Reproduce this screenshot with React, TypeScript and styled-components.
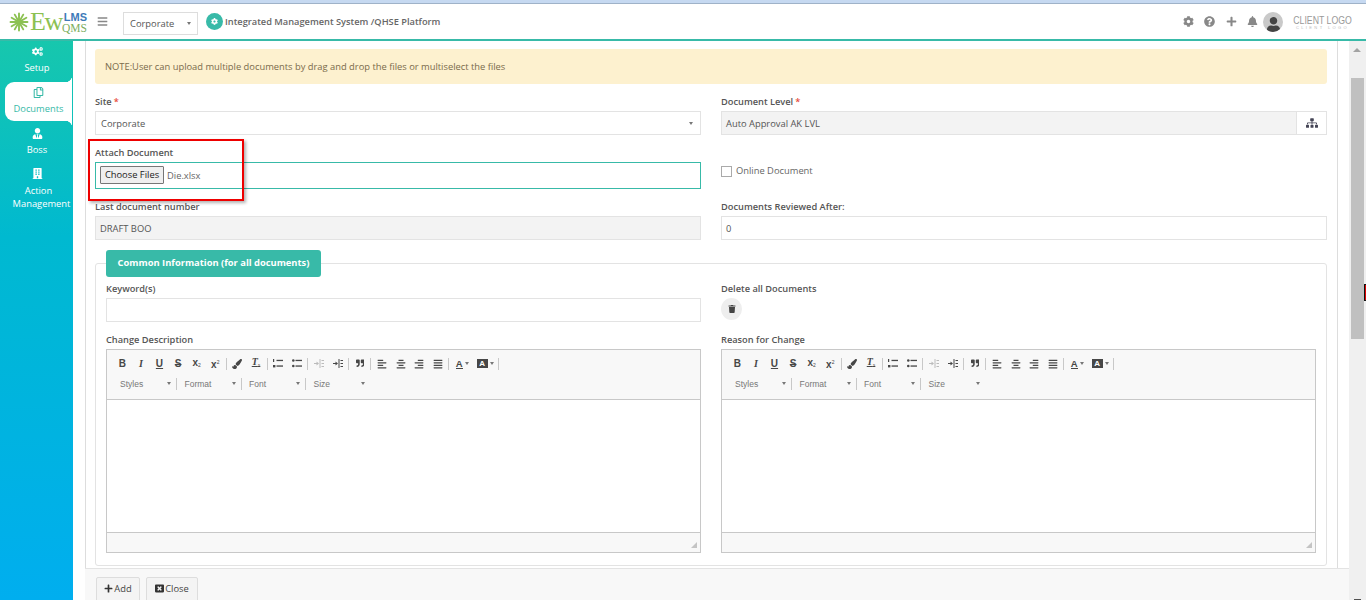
import React from "react";
import styled, { createGlobalStyle } from "styled-components";
import {
  FaAlignCenter, FaAlignJustify, FaAlignLeft, FaAlignRight, FaBars, FaBell, FaBuilding, FaCog, FaCogs,
  FaPaintBrush, FaPlus, FaQuestionCircle, FaQuoteRight, FaRegCopy, FaSitemap, FaTrash, FaUser, FaUserTie,
  FaWindowClose,
} from "react-icons/fa";

const GlobalStyle = createGlobalStyle`
  html, body {
    margin: 0;
    height: 600px;
    overflow: hidden;
    background: #fff;
  }
  * { box-sizing: border-box; }
  body {
    font-family: "Open Sans", "Liberation Sans", sans-serif;
    font-size: 9.35px;
    color: #555;
  }
`;

const Page = styled.div`
  position: relative;
  height: 600px;
  display: flex;
  flex-direction: column;
  overflow: hidden;
`;

const TopStrip = styled.div`
  height: 4px;
  flex: none;
  background: #c6d9f1;
  border-bottom: 1px solid #9fb2c8;
`;

const Header = styled.header`
  height: 37px;
  flex: none;
  display: flex;
  align-items: center;
  padding: 0 14px 0 9px;
  background: #fff;
  border-bottom: 2px solid #38baa8;
`;

const Logo = styled.div`
  width: 78px;
  height: 24px;
  display: flex;
  align-items: center;
  flex: none;
`;

const LogoEw = styled.span`
  width: 32px;
  margin-left: 1px;
  font-family: "Liberation Serif", serif;
  font-size: 26px;
  line-height: 24px;
  letter-spacing: -1.5px;
  white-space: nowrap;
  color: #8cc152;
`;

const LogoStack = styled.div`
  display: flex;
  flex-direction: column;
  align-items: flex-end;
  width: 25px;
  margin-top: 2px;
  line-height: 11px;
`;

const LogoLms = styled.span`
  font-family: "Liberation Sans", sans-serif;
  font-size: 11px;
  font-weight: 700;
  color: #3d7ab8;
`;

const LogoQms = styled.span`
  font-family: "Liberation Serif", serif;
  font-size: 11.5px;
  color: #7cae5e;
`;

const Burger = styled.span`
  display: flex;
  margin-left: 10px;
  color: #888;
  font-size: 11px;
`;

const SiteSelect = styled.div`
  width: 75px;
  height: 23px;
  margin: 3px 0 0 15px;
  padding: 0 6px;
  display: flex;
  align-items: center;
  justify-content: space-between;
  border: 1px solid #ddd;
  color: #555;
  flex: none;
`;

const Caret = styled.span`
  width: 0;
  height: 0;
  flex: none;
  border-left: 2px solid transparent;
  border-right: 2px solid transparent;
  border-top: 3px solid #777;
`;

const ModuleBadge = styled.span`
  width: 17px;
  height: 17px;
  margin-left: 8px;
  border-radius: 50%;
  background: #38baa8;
  color: #fff;
  display: flex;
  align-items: center;
  justify-content: center;
  font-size: 7px;
  flex: none;
`;

const Title = styled.span`
  margin-left: 2px;
  margin-bottom: 1px;
  color: #666;
  font-size: 9.25px;
  font-weight: 600;
  white-space: nowrap;
`;

const HeaderTools = styled.div`
  margin-left: auto;
  display: flex;
  align-items: center;
  color: #888;
`;

const ToolIcon = styled.span`
  display: flex;
  width: 21.3px;
  justify-content: center;
  font-size: 11px;
`;

const Avatar = styled.span`
  width: 20px;
  height: 20px;
  border-radius: 50%;
  background: #c9c9c9;
  color: #444;
  display: flex;
  align-items: flex-end;
  justify-content: center;
  font-size: 15px;
  overflow: hidden;
`;

const ClientLogo = styled.div`
  width: 59px;
  margin-left: 10px;
  display: flex;
  flex-direction: column;
  align-items: center;
  font-family: "Liberation Sans", sans-serif;
  color: #999;
`;

const ClientMain = styled.span`
  margin-top: 1px;
  font-size: 11.5px;
  line-height: 10px;
  white-space: nowrap;
  transform: scaleX(0.76);
`;

const ClientSub = styled.span`
  font-size: 4px;
  line-height: 5px;
  letter-spacing: 2.4px;
  color: #bbb;
  white-space: nowrap;
`;

const Body = styled.div`
  flex: 1;
  min-height: 0;
  display: flex;
`;

const Sidebar = styled.nav`
  width: 73px;
  flex: none;
  background: linear-gradient(180deg, #17c7ad 0%, #00b9d0 35%, #00aeef 100%);
`;

const NavItem = styled.div<{ $active?: boolean; $tall?: boolean }>`
  position: relative;
  height: ${(p) => (p.$tall ? "50px" : p.$active ? "39px" : "40px")};
  margin: ${(p) => (p.$active ? "1px 1px 2px 5px" : "0")};
  padding-top: 2px;
  padding-left: ${(p) => (p.$active ? "0" : "1px")};
  display: flex;
  flex-direction: column;
  align-items: center;
  gap: ${(p) => (p.$tall ? "5px" : "4px")};
  text-align: center;
  font-size: 9.35px;
  line-height: 13px;
  color: ${(p) => (p.$active ? "#38baa8" : "#fff")};
  background: ${(p) => (p.$active ? "#fff" : "transparent")};
  border-radius: ${(p) => (p.$active ? "9px 0 0 9px" : "0")};

  svg {
    font-size: 11px;
    flex: none;
    margin-top: 3px;
  }

  ${(p) =>
    p.$active &&
    `
    &::before, &::after {
      content: "";
      position: absolute;
      right: 0;
      width: 7px;
      height: 7px;
    }
    &::before {
      top: -7px;
      background: radial-gradient(circle at 0 0, transparent 7px, #fff 7.5px);
    }
    &::after {
      bottom: -7px;
      background: radial-gradient(circle at 0 100%, transparent 7px, #fff 7.5px);
    }
  `}
`;

const NavLabel = styled.span`
  white-space: nowrap;
  text-indent: 3px;
`;

const NavSecondLine = styled.span`
  display: block;
  margin-left: 9px;
  text-indent: 0;
`;

const Content = styled.main`
  flex: 1;
  min-width: 0;
  padding-left: 12px;
  display: flex;
  flex-direction: column;
`;

const Panel = styled.div`
  height: 527px;
  flex: none;
  margin-right: 11px;
  padding: 8px 10px 0 9px;
  border-left: 1px solid #ddd;
  border-right: 1px solid #ddd;
`;

const Notice = styled.div`
  height: 35px;
  padding: 0 10px;
  display: flex;
  align-items: center;
  background: #fdf1cf;
  border-radius: 3px;
  color: #7a6b4c;
`;

const FormGrid = styled.div`
  margin-top: 10px;
  display: grid;
  grid-template-columns: 1fr 1fr;
  column-gap: 20px;
  row-gap: 10px;
`;

const Field = styled.div`
  min-width: 0;
  display: flex;
  flex-direction: column;
`;

const Label = styled.label`
  height: 14px;
  margin-bottom: 3px;
  line-height: 16px;
  color: #555;
  font-size: 9.25px;
  font-weight: 600;
`;

const Required = styled.span`
  color: #e74c3c;
  margin-left: 2px;
`;

const Input = styled.div<{ $disabled?: boolean }>`
  height: 24px;
  padding: 0 4px;
  display: flex;
  align-items: center;
  justify-content: space-between;
  border: 1px solid #e3e3e3;
  background: ${(p) => (p.$disabled ? "#f3f3f3" : "#fff")};
  color: #555;
`;

const SiteInput = styled(Input)`
  padding: 0 7px 0 5px;
`;

const FileInput = styled.div`
  height: 27px;
  padding: 0 4px;
  display: flex;
  align-items: center;
  gap: 3px;
  border: 1px solid #38baa8;
  color: #666;
`;

const ChooseButton = styled.span`
  height: 18px;
  width: 64px;
  margin-top: -1px;
  padding-bottom: 1px;
  display: flex;
  align-items: center;
  justify-content: center;
  border: 1px solid #767676;
  border-radius: 1px;
  background: #efefef;
  color: #222;
`;

const CheckRow = styled.div`
  height: 44px;
  padding-top: 19px;
  display: flex;
  align-items: flex-start;
  gap: 4px;
  color: #666;
`;

const CheckBox = styled.span`
  width: 11px;
  height: 11px;
  margin-top: 2px;
  border: 1px solid #aaa;
  background: #fff;
`;

const AddonInput = styled(Input)`
  padding: 0 0 0 4px;
`;

const Addon = styled.span`
  width: 30px;
  height: 100%;
  display: flex;
  align-items: center;
  justify-content: center;
  border-left: 1px solid #e3e3e3;
  background: #fff;
  color: #445;
  font-size: 12px;
`;

const Fieldset = styled.fieldset`
  margin: 10px 0 0;
  padding: 0 10px 12px;
  border: 1px solid #e3e3e3;
  border-radius: 3px;
  min-width: 0;
`;

const Legend = styled.legend`
  width: 215px;
  height: 27px;
  padding: 0 0 2px;
  display: flex;
  align-items: center;
  justify-content: center;
  background: #38baa8;
  border-radius: 3px;
  color: #fff;
  font-size: 9.35px;
  font-weight: 700;
`;

const CommonGrid = styled(FormGrid)`
  margin-top: 4px;
`;

const RoundButton = styled.span`
  width: 21px;
  height: 22px;
  border-radius: 50%;
  background: #eee;
  color: #444;
  display: flex;
  align-items: center;
  justify-content: center;
  font-size: 8px;
`;

const Editor = styled.div`
  height: 204px;
  display: flex;
  flex-direction: column;
  border: 1px solid #c8c8c8;
`;

const EditorToolbar = styled.div`
  height: 50px;
  flex: none;
  padding: 5px 0 0 6px;
  background: #f8f8f8;
  border-bottom: 1px solid #c8c8c8;
`;

const ToolRow = styled.div`
  height: 17px;
  display: flex;
  align-items: center;
`;

const ComboRow = styled(ToolRow)`
  margin-top: 3px;
  margin-left: 7px;
`;

const ToolButton = styled.span<{ $muted?: boolean; $wide?: boolean }>`
  width: ${(p) => (p.$wide ? "23px" : "18.6px")};
  display: flex;
  align-items: center;
  justify-content: center;
  gap: 2px;
  color: ${(p) => (p.$muted ? "#bbb" : "#474747")};
  font-size: 8.5px;
`;

const Glyph = styled.span<{ $italic?: boolean; $line?: string }>`
  font-family: ${(p) => (p.$italic ? '"Liberation Serif", serif' : '"Liberation Sans", sans-serif')};
  font-style: ${(p) => (p.$italic ? "italic" : "normal")};
  font-weight: 700;
  font-size: 10px;
  line-height: 10px;
  text-decoration: ${(p) => p.$line ?? "none"};
`;

const Script = styled.span<{ $up?: boolean }>`
  font-size: 5px;
  font-weight: 400;
  font-style: normal;
  vertical-align: ${(p) => (p.$up ? "4px" : "-1px")};
`;

const ToolSep = styled.span`
  width: 1px;
  height: 12px;
  margin: 0 1.3px;
  flex: none;
  background: #c8c8c8;
`;

const Combo = styled.span`
  width: 56px;
  display: flex;
  align-items: center;
  justify-content: space-between;
  padding-right: 5px;
  font-family: "Liberation Sans", sans-serif;
  font-size: 8.5px;
  color: #777;
`;

const ComboCell = styled.span`
  display: flex;
  align-items: center;

  ${ToolSep} {
    margin: 0 7.5px 0 0;
  }
`;

const ListLines = styled.svg`
  width: 10px;
  height: 9px;
  fill: currentColor;
`;

const ColorA = styled(Glyph)`
  font-size: 9.5px;
  line-height: 9px;
  border-bottom: 1px solid #474747;
`;

const BackA = styled.span`
  width: 11px;
  height: 9px;
  display: flex;
  align-items: center;
  justify-content: center;
  background: #474747;
  color: #fff;
  font-family: "Liberation Sans", sans-serif;
  font-weight: 700;
  font-size: 8px;
`;

const EditorArea = styled.div`
  flex: 1;
  background: #fff;
`;

const EditorFooter = styled.div`
  height: 20px;
  flex: none;
  position: relative;
  background: #f8f8f8;
  border-top: 1px solid #c8c8c8;
`;

const ResizeGrip = styled.span`
  position: absolute;
  right: 3px;
  bottom: 4px;
  width: 0;
  height: 0;
  border-left: 6px solid transparent;
  border-bottom: 6px solid #c4c4c4;
`;

const Footer = styled.footer`
  flex: 1;
  padding: 8px 0 0 11px;
  display: flex;
  gap: 6px;
  background: #f8f8f8;
  border-top: 1px solid #e3e3e3;
`;

const FooterButton = styled.span<{ $width: number }>`
  width: ${(p) => p.$width}px;
  height: 26px;
  padding-bottom: 4px;
  display: flex;
  align-items: center;
  justify-content: center;
  gap: 1px;
  border: 1px solid #ddd;
  border-radius: 2px;
  background: #f4f4f4;
  color: #444;

  svg { font-size: 9px; color: #333; }
`;

const Scrollbar = styled.div`
  position: relative;
  width: 17px;
  flex: none;
  background: #f0f0f0;
`;

const ScrollThumb = styled.div`
  position: absolute;
  top: 37px;
  left: 2px;
  width: 13px;
  height: 261px;
  background: #c0c0c0;
`;

const ScrollUp = styled.span`
  position: absolute;
  top: 7px;
  left: 4px;
  width: 0;
  height: 0;
  border-left: 4px solid transparent;
  border-right: 4px solid transparent;
  border-bottom: 4px solid #a3a3a3;
`;

const ScrollDown = styled.span`
  position: absolute;
  bottom: 0;
  left: 5px;
  width: 7px;
  height: 1px;
  background: #505050;
`;

const Callout = styled.div`
  position: absolute;
  left: 88px;
  top: 139px;
  width: 156px;
  height: 62px;
  border: 2px solid #ee0000;
  box-shadow: 2px 2px 3px rgba(0, 0, 0, 0.3);
  pointer-events: none;
`;

const CursorMark = styled.div`
  position: absolute;
  left: 1364px;
  top: 284px;
  width: 2px;
  height: 17px;
  background: #dd0000;
  border: 1px solid #111;
  border-right: none;
`;

const Spark = () => (
  <svg width="20" height="20" viewBox="0 0 20 20" aria-hidden="true">
    <g stroke="#8cc152" strokeWidth="1.9" strokeLinecap="round">
      {[0, 30, 60, 90, 120, 150].map((a) => (
        <line key={a} x1="10" y1="1.5" x2="10" y2="18.5" transform={`rotate(${a} 10 10)`} />
      ))}
    </g>
    <circle cx="10" cy="10" r="3" fill="#8cc152" />
  </svg>
);

const OrderedIcon = () => (
  <ListLines viewBox="0 0 10 9">
    <rect x="0" y="0" width="1.2" height="3" />
    <rect x="0" y="6" width="2.4" height="2.4" />
    <rect x="3.5" y="0.8" width="6.5" height="1.3" />
    <rect x="3.5" y="6.4" width="6.5" height="1.3" />
  </ListLines>
);

const BulletIcon = () => (
  <ListLines viewBox="0 0 10 9">
    <circle cx="1.3" cy="1.5" r="1.3" />
    <circle cx="1.3" cy="7" r="1.3" />
    <rect x="3.5" y="0.8" width="6.5" height="1.3" />
    <rect x="3.5" y="6.4" width="6.5" height="1.3" />
  </ListLines>
);

const IndentIcon = () => (
  <ListLines viewBox="0 0 10 9">
    <rect x="5.5" y="0" width="1" height="9" />
    <rect x="7.5" y="1" width="2.5" height="1" />
    <rect x="7.5" y="4" width="2.5" height="1" />
    <rect x="7.5" y="7" width="2.5" height="1" />
    <path d="M0 4h2.5V2.5L5 4.5 2.5 6.500V5H0z" />
  </ListLines>
);

const RichEditor = () => (
  <Editor>
    <EditorToolbar>
      <ToolRow>
        <ToolButton><Glyph>B</Glyph></ToolButton>
        <ToolButton><Glyph $italic>I</Glyph></ToolButton>
        <ToolButton><Glyph $line="underline">U</Glyph></ToolButton>
        <ToolButton><Glyph $line="line-through">S</Glyph></ToolButton>
        <ToolButton><Glyph>x<Script>2</Script></Glyph></ToolButton>
        <ToolButton><Glyph>x<Script $up>2</Script></Glyph></ToolButton>
        <ToolSep />
        <ToolButton><FaPaintBrush size={10} /></ToolButton>
        <ToolButton><Glyph $italic $line="underline">T<Script>x</Script></Glyph></ToolButton>
        <ToolSep />
        <ToolButton><OrderedIcon /></ToolButton>
        <ToolButton><BulletIcon /></ToolButton>
        <ToolSep />
        <ToolButton $muted><IndentIcon /></ToolButton>
        <ToolButton><IndentIcon /></ToolButton>
        <ToolSep />
        <ToolButton><FaQuoteRight /></ToolButton>
        <ToolSep />
        <ToolButton><FaAlignLeft size={10} /></ToolButton>
        <ToolButton><FaAlignCenter size={10} /></ToolButton>
        <ToolButton><FaAlignRight size={10} /></ToolButton>
        <ToolButton><FaAlignJustify size={10} /></ToolButton>
        <ToolSep />
        <ToolButton $wide><ColorA>A</ColorA><Caret /></ToolButton>
        <ToolButton $wide><BackA>A</BackA><Caret /></ToolButton>
        <ToolSep />
      </ToolRow>
      <ComboRow>
        {["Styles", "Format", "Font", "Size"].map((name, i) => (
          <ComboCell key={name}>
            <Combo>{name}<Caret /></Combo>
            {i < 3 && <ToolSep />}
          </ComboCell>
        ))}
      </ComboRow>
    </EditorToolbar>
    <EditorArea />
    <EditorFooter><ResizeGrip /></EditorFooter>
  </Editor>
);

export default function App() {
  return (
    <Page>
      <GlobalStyle />
      <TopStrip />
      <Header>
        <Logo>
          <Spark />
          <LogoEw>Ew</LogoEw>
          <LogoStack>
            <LogoLms>LMS</LogoLms>
            <LogoQms>QMS</LogoQms>
          </LogoStack>
        </Logo>
        <Burger><FaBars /></Burger>
        <SiteSelect>Corporate<Caret /></SiteSelect>
        <ModuleBadge><FaCog /></ModuleBadge>
        <Title>Integrated Management System /QHSE Platform</Title>
        <HeaderTools>
          <ToolIcon><FaCog /></ToolIcon>
          <ToolIcon><FaQuestionCircle /></ToolIcon>
          <ToolIcon><FaPlus /></ToolIcon>
          <ToolIcon><FaBell /></ToolIcon>
          <Avatar><FaUser /></Avatar>
          <ClientLogo>
            <ClientMain>CLIENT LOGO</ClientMain>
            <ClientSub>CLIENT LOGO</ClientSub>
          </ClientLogo>
        </HeaderTools>
      </Header>
      <Body>
        <Sidebar>
          <NavItem><FaCogs />Setup</NavItem>
          <NavItem $active><FaRegCopy />Documents</NavItem>
          <NavItem><FaUserTie />Boss</NavItem>
          <NavItem $tall>
            <FaBuilding />
            <NavLabel>Action<NavSecondLine>Management</NavSecondLine></NavLabel>
          </NavItem>
        </Sidebar>
        <Content>
          <Panel>
            <Notice>NOTE:User can upload multiple documents by drag and drop the files or multiselect the files</Notice>
            <FormGrid>
              <Field>
                <Label>Site<Required>*</Required></Label>
                <SiteInput>Corporate<Caret /></SiteInput>
              </Field>
              <Field>
                <Label>Document Level<Required>*</Required></Label>
                <AddonInput $disabled>Auto Approval AK LVL<Addon><FaSitemap /></Addon></AddonInput>
              </Field>
              <Field>
                <Label>Attach Document</Label>
                <FileInput><ChooseButton>Choose Files</ChooseButton>Die.xlsx</FileInput>
              </Field>
              <CheckRow><CheckBox />Online Document</CheckRow>
              <Field>
                <Label>Last document number</Label>
                <Input $disabled>DRAFT BOO</Input>
              </Field>
              <Field>
                <Label>Documents Reviewed After:</Label>
                <Input>0</Input>
              </Field>
            </FormGrid>
            <Fieldset>
              <Legend>Common Information (for all documents)</Legend>
              <CommonGrid>
                <Field>
                  <Label>Keyword(s)</Label>
                  <Input />
                </Field>
                <Field>
                  <Label>Delete all Documents</Label>
                  <RoundButton><FaTrash /></RoundButton>
                </Field>
                <Field>
                  <Label>Change Description</Label>
                  <RichEditor />
                </Field>
                <Field>
                  <Label>Reason for Change</Label>
                  <RichEditor />
                </Field>
              </CommonGrid>
            </Fieldset>
          </Panel>
          <Footer>
            <FooterButton $width={44}><FaPlus />Add</FooterButton>
            <FooterButton $width={52}><FaWindowClose />Close</FooterButton>
          </Footer>
        </Content>
        <Scrollbar>
          <ScrollUp />
          <ScrollThumb />
          <ScrollDown />
        </Scrollbar>
      </Body>
      <Callout />
      <CursorMark />
    </Page>
  );
}
